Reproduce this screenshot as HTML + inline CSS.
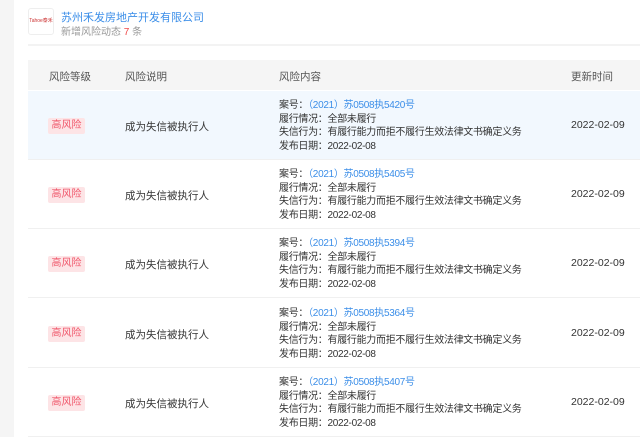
<!DOCTYPE html>
<html><head><meta charset="utf-8"><style>
*{margin:0;padding:0;box-sizing:border-box}
body{width:640px;height:437px;overflow:hidden;background:#fff;font-family:"Liberation Sans","Noto Sans CJK SC",sans-serif;position:relative;color:#333}
.side{position:absolute;left:0;top:0;width:14px;height:437px;background:#f5f5f5}
.logo{position:absolute;left:28px;top:8px;width:26px;height:27px;border:1px solid #eee;border-radius:3px;font-size:5px;color:#c33;text-align:center;line-height:25px;overflow:hidden;white-space:nowrap}
.title{position:absolute;left:61px;top:9px;font-size:11px;color:#3b8ee8}
.sub{position:absolute;left:61px;top:23px;font-size:10px;color:#999}
.sub b{color:#f04848;font-weight:normal}
.div{position:absolute;left:28px;top:44px;width:612px;height:2px;background:#f3f3f3}
.hd{position:absolute;left:28px;top:60px;width:612px;height:30px;background:#f5f5f5;font-size:10.5px;color:#555}
.hd span{position:absolute;top:9px}
.row{position:absolute;left:28px;width:612px;height:69px;border-bottom:1px solid #f0f0f0;font-size:10.5px}
.row.a{background:#f2f8fe}
.badge{position:absolute;left:20px;top:27px;width:37px;height:16px;background:#fde4e6;color:#f0566a;font-size:10px;line-height:16px;text-align:center;border-radius:2px}
.desc{position:absolute;left:97px;top:28px}
.ct{position:absolute;left:251px;top:8px;line-height:13.7px;font-size:10px;letter-spacing:-0.3px;white-space:nowrap}
.ct .l{color:#3b8ee8}
.tm{position:absolute;left:543px;top:28px}
</style></head><body>
<div class="side"></div>
<div class="logo">Tahoe泰禾</div>
<div class="title">苏州禾发房地产开发有限公司</div>
<div class="sub">新增风险动态 <b>7</b> 条</div>
<div class="div"></div>
<div class="hd"><span style="left:21px">风险等级</span><span style="left:97px">风险说明</span><span style="left:251px">风险内容</span><span style="left:543px">更新时间</span></div>
<div class="row a" style="top:91px"><div class="badge">高风险</div><div class="desc">成为失信被执行人</div><div class="ct">案号：<span class="l">（2021）苏0508执5420号</span><br>履行情况：全部未履行<br>失信行为：有履行能力而拒不履行生效法律文书确定义务<br>发布日期：2022-02-08</div><div class="tm">2022-02-09</div></div>
<div class="row" style="top:160px"><div class="badge">高风险</div><div class="desc">成为失信被执行人</div><div class="ct">案号：<span class="l">（2021）苏0508执5405号</span><br>履行情况：全部未履行<br>失信行为：有履行能力而拒不履行生效法律文书确定义务<br>发布日期：2022-02-08</div><div class="tm">2022-02-09</div></div>
<div class="row" style="top:229px"><div class="badge">高风险</div><div class="desc">成为失信被执行人</div><div class="ct">案号：<span class="l">（2021）苏0508执5394号</span><br>履行情况：全部未履行<br>失信行为：有履行能力而拒不履行生效法律文书确定义务<br>发布日期：2022-02-08</div><div class="tm">2022-02-09</div></div>
<div class="row" style="top:299px"><div class="badge">高风险</div><div class="desc">成为失信被执行人</div><div class="ct">案号：<span class="l">（2021）苏0508执5364号</span><br>履行情况：全部未履行<br>失信行为：有履行能力而拒不履行生效法律文书确定义务<br>发布日期：2022-02-08</div><div class="tm">2022-02-09</div></div>
<div class="row" style="top:368px"><div class="badge">高风险</div><div class="desc">成为失信被执行人</div><div class="ct">案号：<span class="l">（2021）苏0508执5407号</span><br>履行情况：全部未履行<br>失信行为：有履行能力而拒不履行生效法律文书确定义务<br>发布日期：2022-02-08</div><div class="tm">2022-02-09</div></div>
</body></html>
